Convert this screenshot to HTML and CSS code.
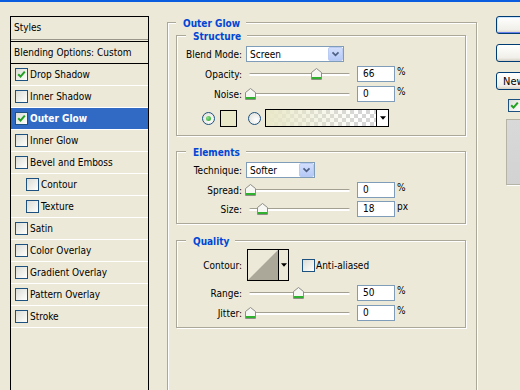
FILE: index.html
```html
<!DOCTYPE html>
<html lang="en">
  <head>
    <meta charset="UTF-8" />
    <title>Layer Style</title>
    <link rel="stylesheet" href="styles.css">
  </head>
  <body>
    <div class="titlebar"></div>
    <div class="dialog">
      <div class="styles-list">
        <div class="styles-head">Styles</div>
        <div class="styles-blend">Blending Options: Custom</div>
        <div class="style-row"><span class="check"><svg viewBox="0 0 11 11"><path d="M2.2 5.2l2.3 2.4 4.3-5" /></svg></span>Drop Shadow</div>
        <div class="style-row"><span class="check"></span>Inner Shadow</div>
        <div class="style-row selected"><span class="check"><svg viewBox="0 0 11 11"><path d="M2.2 5.2l2.3 2.4 4.3-5" /></svg></span>Outer Glow</div>
        <div class="style-row"><span class="check"></span>Inner Glow</div>
        <div class="style-row"><span class="check"></span>Bevel and Emboss</div>
        <div class="style-row sub"><span class="check"></span>Contour</div>
        <div class="style-row sub"><span class="check"></span>Texture</div>
        <div class="style-row"><span class="check"></span>Satin</div>
        <div class="style-row"><span class="check"></span>Color Overlay</div>
        <div class="style-row"><span class="check"></span>Gradient Overlay</div>
        <div class="style-row"><span class="check"></span>Pattern Overlay</div>
        <div class="style-row"><span class="check"></span>Stroke</div>
      </div>

      <div class="main">
        <div class="group outer">
          <div class="group-title">Outer Glow</div>

          <div class="group inner structure">
            <div class="group-title">Structure</div>
            <div class="row">
              <span class="lbl">Blend Mode:</span>
              <div class="select blend-select">
                <span class="select-text">Screen</span>
                <span class="select-btn"><svg viewBox="0 0 15 14"><path d="M4 5l3.5 3.5L11 5" /></svg></span>
              </div>
            </div>
            <div class="row slide-row">
              <span class="lbl">Opacity:</span>
              <div class="slider"><div class="track"></div><span class="thumb" style="left: 67px"><svg viewBox="0 0 11 12"><path class="thumb-body" d="M5.5 0.5L10.5 4.5V11.5H0.5V4.5Z" /><path class="thumb-foot" d="M1 10h9" /></svg></span></div>
              <div class="field">66</div><span class="unit">%</span>
            </div>
            <div class="row slide-row">
              <span class="lbl">Noise:</span>
              <div class="slider"><div class="track"></div><span class="thumb" style="left: 1px"><svg viewBox="0 0 11 12"><path class="thumb-body" d="M5.5 0.5L10.5 4.5V11.5H0.5V4.5Z" /><path class="thumb-foot" d="M1 10h9" /></svg></span></div>
              <div class="field">0</div><span class="unit">%</span>
            </div>
            <div class="row color-row">
              <span class="radio on"></span>
              <span class="swatch"></span>
              <span class="radio radio-grad"></span>
              <div class="gradient">
                <span class="gradient-fill"></span>
                <span class="gradient-btn"><svg viewBox="0 0 7 4"><path d="M0 0h7L3.5 4z" /></svg></span>
              </div>
            </div>
          </div>

          <div class="group inner elements">
            <div class="group-title">Elements</div>
            <div class="row">
              <span class="lbl">Technique:</span>
              <div class="select tech-select">
                <span class="select-text">Softer</span>
                <span class="select-btn"><svg viewBox="0 0 15 14"><path d="M4 5l3.5 3.5L11 5" /></svg></span>
              </div>
            </div>
            <div class="row slide-row">
              <span class="lbl">Spread:</span>
              <div class="slider"><div class="track"></div><span class="thumb" style="left: 1px"><svg viewBox="0 0 11 12"><path class="thumb-body" d="M5.5 0.5L10.5 4.5V11.5H0.5V4.5Z" /><path class="thumb-foot" d="M1 10h9" /></svg></span></div>
              <div class="field">0</div><span class="unit">%</span>
            </div>
            <div class="row slide-row size-row">
              <span class="lbl">Size:</span>
              <div class="slider"><div class="track"></div><span class="thumb" style="left: 13px"><svg viewBox="0 0 11 12"><path class="thumb-body" d="M5.5 0.5L10.5 4.5V11.5H0.5V4.5Z" /><path class="thumb-foot" d="M1 10h9" /></svg></span></div>
              <div class="field">18</div><span class="unit">px</span>
            </div>
          </div>

          <div class="group inner quality">
            <div class="group-title">Quality</div>
            <div class="row contour-row">
              <span class="lbl">Contour:</span>
              <div class="contour">
                <svg class="contour-img" viewBox="0 0 30 30"><path d="M0 30L30 0V30Z" /></svg>
                <span class="contour-btn"><svg viewBox="0 0 7 4"><path d="M0 0h7L3.5 4z" /></svg></span>
              </div>
              <span class="check aa-check"></span><span class="aa-label">Anti-aliased</span>
            </div>
            <div class="row slide-row">
              <span class="lbl">Range:</span>
              <div class="slider"><div class="track"></div><span class="thumb" style="left: 49px"><svg viewBox="0 0 11 12"><path class="thumb-body" d="M5.5 0.5L10.5 4.5V11.5H0.5V4.5Z" /><path class="thumb-foot" d="M1 10h9" /></svg></span></div>
              <div class="field">50</div><span class="unit">%</span>
            </div>
            <div class="row slide-row">
              <span class="lbl">Jitter:</span>
              <div class="slider"><div class="track"></div><span class="thumb" style="left: 1px"><svg viewBox="0 0 11 12"><path class="thumb-body" d="M5.5 0.5L10.5 4.5V11.5H0.5V4.5Z" /><path class="thumb-foot" d="M1 10h9" /></svg></span></div>
              <div class="field">0</div><span class="unit">%</span>
            </div>
          </div>
        </div>
      </div>

      <div class="side">
        <button type="button" class="btn default">OK</button>
        <button type="button" class="btn">Cancel</button>
        <button type="button" class="btn new-style">New Style...</button>
        <div class="preview-toggle">
          <span class="check"><svg viewBox="0 0 11 11"><path d="M2.2 5.2l2.3 2.4 4.3-5" /></svg></span>Preview
        </div>
        <div class="preview"></div>
      </div>
    </div>
  </body>
</html>
```

FILE: styles.css
```css
html,
body {
  margin: 0;
  padding: 0;
  height: 100%;
  overflow: hidden;
}
body {
  font-family: "DejaVu Sans Condensed", "Liberation Sans", sans-serif;
  font-size: 10px;
  background-color: #ece9d8;
  color: #000;
}
.titlebar {
  height: 2px;
  background-color: #0a5ddf;
}
.dialog {
  display: flex;
  align-items: flex-start;
  height: 388px;
  overflow: hidden;
  white-space: nowrap;
}

/* left list */
.styles-list {
  flex: none;
  margin: 14px 0 0 10px;
  width: 139px;
  height: 380px;
  box-sizing: border-box;
  border: 1px solid #000;
}
.styles-head {
  height: 22px;
  line-height: 21px;
  padding-left: 3px;
  border-bottom: 1px solid #9a978a;
  margin-bottom: 1px;
}
.styles-blend {
  height: 21px;
  line-height: 21px;
  padding-left: 3px;
  border-top: 1px solid #000;
  border-bottom: 1px solid #000;
}
.style-row {
  display: flex;
  align-items: center;
  gap: 2px;
  height: 21px;
  padding-left: 4px;
  border-bottom: 1px solid #fff;
}
.style-row.sub {
  padding-left: 15px;
}
.style-row.selected {
  background-color: #316ac5;
  color: #fff;
  font-weight: bold;
}

/* xp checkbox / radio */
.check {
  display: inline-block;
  flex: none;
  width: 13px;
  height: 13px;
  box-sizing: border-box;
  border: 1px solid #1c5180;
  background: linear-gradient(135deg, #dcdcd7, #f4f4f0 70%, #fff);
}
.check svg {
  display: block;
  width: 11px;
  height: 11px;
}
.check path {
  fill: none;
  stroke: #21a121;
  stroke-width: 2;
}
.radio {
  display: inline-block;
  flex: none;
  width: 13px;
  height: 13px;
  box-sizing: border-box;
  border: 1px solid #1c5180;
  border-radius: 50%;
  background: radial-gradient(circle at 65% 65%, #fff, #dcdcd7);
  position: relative;
}
.radio.on::after {
  content: "";
  position: absolute;
  left: 3px;
  top: 3px;
  width: 5px;
  height: 5px;
  border-radius: 50%;
  background: radial-gradient(circle at 35% 35%, #8be08b, #21a121);
}

/* group boxes */
.main {
  flex: none;
  margin: 20px 0 0 18px;
}
.group {
  border: 1px solid #aca899;
  box-shadow: 1px 1px 0 #fff, inset 1px 1px 0 #fff;
}
.group.outer {
  width: 310px;
  height: 370px;
  box-sizing: border-box;
}
.group.inner {
  width: 290px;
  box-sizing: border-box;
  margin-left: 8px;
}
.group-title {
  width: max-content;
  height: 13px;
  line-height: 15px;
  margin: -7px 0 0 8px;
  padding: 0 6px 0 7px;
  background-color: #ece9d8;
  color: #0046d5;
  font-weight: bold;
}
.inner .group-title {
  margin-left: 9px;
}
.structure {
  margin-top: 6px;
  padding-bottom: 8px;
}
.elements {
  margin-top: 15px;
  padding-bottom: 6px;
}
.quality {
  margin-top: 16px;
  padding-bottom: 6px;
}

/* rows */
.row {
  display: flex;
  align-items: center;
  height: 16px;
  margin-top: 4px;
}
.structure .row:first-of-type {
  margin-top: 3px;
}
.elements .row:first-of-type {
  margin-top: 4px;
}
.size-row {
  margin-top: 3px;
}
.lbl {
  width: 65px;
  text-align: right;
  flex: none;
}

.select {
  display: flex;
  align-items: center;
  height: 16px;
  box-sizing: border-box;
  margin-left: 4px;
  border: 1px solid #7f9db9;
  background-color: #fff;
}
.blend-select {
  width: 98px;
}
.tech-select {
  width: 69px;
}
.select-text {
  flex: 1;
  padding-left: 3px;
}
.select-btn {
  width: 15px;
  height: 14px;
  box-sizing: border-box;
  border: 1px solid #b9cbf3;
  border-radius: 2px;
  background: linear-gradient(#d2defc, #b5c9f7);
}
.select-btn svg {
  display: block;
  width: 13px;
  height: 12px;
}
.select-btn path {
  fill: none;
  stroke: #4d6185;
  stroke-width: 2;
}

/* sliders */
.slider {
  position: relative;
  width: 108px;
  height: 16px;
  flex: none;
  margin-left: 2px;
  display: flex;
  align-items: center;
}
.track {
  flex: 1;
  height: 2px;
  margin: 0 2px 0 5px;
  background-color: #fff;
  border-top: 1px solid #a3a092;
  border-radius: 2px;
}
.thumb {
  position: absolute;
  top: 2px;
  width: 11px;
  height: 12px;
}
.thumb svg {
  display: block;
  width: 11px;
  height: 12px;
}
.thumb-body {
  fill: #f6f6f3;
  stroke: #8e8e86;
}
.thumb-foot {
  stroke: #2fb12f;
  stroke-width: 2;
}
.field {
  width: 38px;
  height: 16px;
  box-sizing: border-box;
  margin-left: 5px;
  padding-left: 5px;
  line-height: 14px;
  border: 1px solid #7f9db9;
  background-color: #fff;
  flex: none;
}
.unit {
  margin-left: 2px;
  align-self: flex-start;
  line-height: 12px;
}

/* color / gradient row */
.color-row {
  height: 18px;
  margin-top: 7px;
}
.color-row .radio.on {
  margin-left: 25px;
}
.swatch {
  width: 17px;
  height: 17px;
  box-sizing: border-box;
  margin-left: 5px;
  border: 1px solid #000;
  background-color: #e9e8c9;
}
.radio-grad {
  margin-left: 11px;
}
.gradient {
  display: flex;
  width: 124px;
  height: 18px;
  box-sizing: border-box;
  margin-left: 4px;
  border: 1px solid #000;
  background-color: #fff;
  background-image: repeating-conic-gradient(#d6d6d6 0 25%, #fff 0 50%);
  background-size: 8px 8px;
}
.gradient-fill {
  flex: 1;
  background: linear-gradient(90deg, #e9e8c9, rgba(233, 232, 201, 0) 85%);
}
.gradient-btn,
.contour-btn {
  display: flex;
  align-items: center;
  justify-content: center;
  width: 11px;
  border-left: 1px solid #000;
  background-color: #fff;
}
.gradient-btn svg,
.contour-btn svg {
  width: 6px;
  height: 4px;
}

/* contour */
.contour-row {
  height: 32px;
  margin-top: 2px;
}
.contour {
  display: flex;
  width: 42px;
  height: 32px;
  box-sizing: border-box;
  margin-left: 5px;
  border: 1px solid #000;
  background-color: #ece9d8;
}
.contour-img {
  width: 30px;
  height: 30px;
}
.contour-img path {
  fill: #aca899;
}
.contour-btn {
  flex: 1;
  background-color: #ece9d8;
}
.aa-check {
  margin-left: 13px;
}
.aa-label {
  margin-left: 1px;
}

/* right column */
.side {
  flex: none;
  margin: 14px 0 0 19px;
  display: flex;
  flex-direction: column;
  align-items: flex-start;
}
.btn {
  width: 90px;
  height: 18px;
  margin: 0 0 10px;
  padding: 0;
  font: inherit;
  font-size: 11px;
  color: #000;
  border: 1px solid #003c74;
  border-radius: 3px;
  background: linear-gradient(#fff, #f0efe9 80%, #d6d0c5);
}
.btn.default {
  box-shadow: inset 1px 1px 0 #cee7ff, inset -1px -1px 0 #6982ee;
}
.btn.new-style {
  text-align: left;
  padding-left: 6px;
}
.preview-toggle {
  display: flex;
  align-items: center;
  gap: 3px;
  margin: -1px 0 0 12px;
}
.preview {
  width: 80px;
  height: 64px;
  margin: 7px 0 0 10px;
  border: 1px solid #b5b2a6;
  box-shadow: 1px 1px 0 #fff;
  background: linear-gradient(#d9d9d9, #d2d2d2);
}
```
